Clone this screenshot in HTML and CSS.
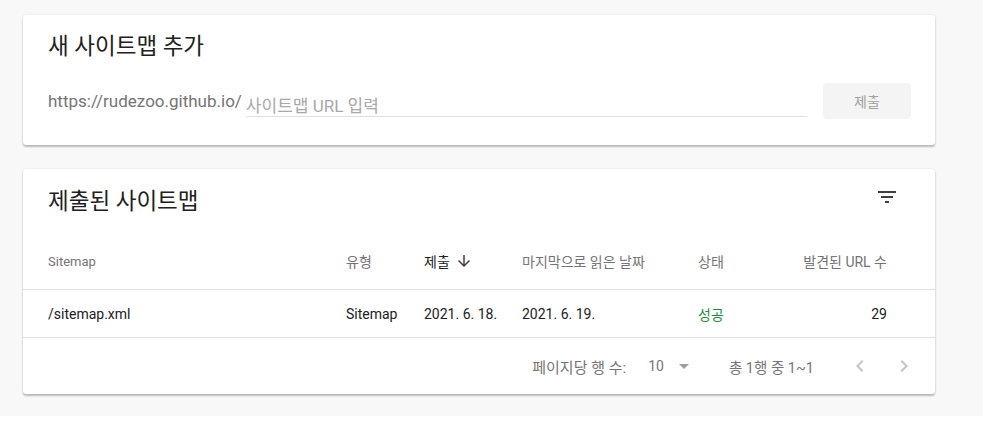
FILE: index.html
```html
<!DOCTYPE html>
<html lang="ko">
<head>
<meta charset="utf-8">
<title>Sitemaps</title>
<link rel="stylesheet" href="styles.css">
</head>
<body>
<div class="page">
  <section class="card add-card">
    <h2 class="card-title">새 사이트맵 추가</h2>
    <div class="form-row">
      <span class="prefix">https://rudezoo.github.io/</span>
      <div class="url-field"><input class="url-input" type="text" placeholder="사이트맵 URL 입력"></div>
      <button class="submit-btn" type="button">제출</button>
    </div>
  </section>

  <section class="card list-card">
    <div class="list-head">
      <h2 class="card-title">제출된 사이트맵</h2>
      <svg class="filter-icon" width="24" height="24" viewBox="0 0 24 24"><path d="M10 18h4v-2h-4v2zM3 6v2h18V6H3zm3 7h12v-2H6v2z" fill="#3c4043"/></svg>
    </div>
    <div class="trow thead">
      <div class="latin">Sitemap</div>
      <div>유형</div>
      <div class="sorted">제출<svg width="18" height="18" viewBox="0 0 24 24"><path d="M20 12l-1.41-1.41L13 16.17V4h-2v12.17l-5.58-5.59L4 12l8 8 8-8z" fill="#3c4043"/></svg></div>
      <div>마지막으로 읽은 날짜</div>
      <div>상태</div>
      <div class="num">발견된 URL 수</div>
    </div>
    <div class="trow tbody">
      <div>/sitemap.xml</div>
      <div>Sitemap</div>
      <div>2021. 6. 18.</div>
      <div>2021. 6. 19.</div>
      <div class="ok">성공</div>
      <div class="num">29</div>
    </div>
    <div class="pager">
      <span class="rows-label">페이지당 행 수:</span>
      <span class="rows-value">10</span>
      <svg class="drop" width="24" height="24" viewBox="0 0 24 24"><path d="M7 10l5 5 5-5z" fill="#9e9e9e"/></svg>
      <span class="range">총 1행 중 1~1</span>
      <svg class="chev" width="24" height="24" viewBox="0 0 24 24"><path d="M15.41 7.41L14 6l-6 6 6 6 1.41-1.41L10.83 12z" fill="#c4c4c4"/></svg>
      <svg class="chev next" width="24" height="24" viewBox="0 0 24 24"><path d="M10 6L8.59 7.41 13.17 12l-4.58 4.59L10 18l6-6z" fill="#c4c4c4"/></svg>
    </div>
  </section>
</div>
</body>
</html>
```

FILE: styles.css
```css
* { box-sizing: border-box; }
html, body { margin: 0; padding: 0; background: #fff; }
body {
  font-family: Roboto, "Noto Sans CJK KR", sans-serif;
  color: #212121;
}
.page {
  width: 983px;
  height: 416px;
  background: #f8f8f8;
  padding: 15px 0 0 23px;
  display: flex;
  flex-direction: column;
  gap: 24px;
}
.card {
  width: 912px;
  background: #fff;
  border-radius: 3px;
  box-shadow: 0 2px 2px rgba(0,0,0,0.24), 0 0 2px rgba(0,0,0,0.12);
}
.card-title {
  margin: 0;
  font-size: 22.5px;
  font-weight: 400;
  line-height: 32px;
  color: #212121;
}
.add-card {
  padding: 15px 24px 26px 25px;
}
.form-row {
  margin-top: 21px;
  display: flex;
  align-items: center;
  height: 36px;
}
.prefix {
  font-size: 17px;
  line-height: 20px;
  color: #757575;
}
.url-field {
  flex: 1;
  align-self: flex-start;
  height: 34px;
  margin: 0 16px 0 4px;
  border-bottom: 1px solid #e0e0e0;
  display: flex;
  align-items: flex-end;
}
.url-input {
  width: 100%;
  border: none;
  outline: none;
  background: transparent;
  font-family: Roboto, "Noto Sans CJK KR", sans-serif;
  font-size: 17px;
  line-height: 20px;
  padding: 0;
  color: #212121;
}
.url-input::placeholder { color: #a8a8a8; }
.submit-btn {
  width: 88px;
  height: 36px;
  border: none;
  border-radius: 4px;
  background: #f4f4f4;
  color: #9e9e9e;
  font-family: Roboto, "Noto Sans CJK KR", sans-serif;
  font-size: 14px;
  padding: 0;
}
.list-head {
  height: 64px;
  padding: 0 36px 0 25px;
  display: flex;
  align-items: center;
  justify-content: space-between;
}
.filter-icon { margin-top: -8px; display: block; }
.trow {
  display: grid;
  grid-template-columns: 298px 78px 98px 176px 1fr auto;
  align-items: center;
  padding: 0 48px 0 25px;
  border-bottom: 1px solid #e0e0e0;
}
.thead {
  height: 57px;
  font-size: 14px;
  color: #757575;
}
.thead .latin { font-size: 13px; }
.thead .sorted {
  color: #212121;
  display: flex;
  align-items: center;
  gap: 5px;
}
.thead .sorted svg { display: block; }
.tbody {
  height: 48px;
  font-size: 14px;
  color: #212121;
}
.num { text-align: right; }
.ok { color: #1e8e3e; }
.pager {
  height: 56px;
  display: flex;
  align-items: center;
  justify-content: flex-end;
  padding-right: 19px;
  font-size: 14px;
  color: #757575;
}
.rows-label { margin-right: 22px; font-size: 15px; }
.rows-value { margin-right: 8px; }
.drop { display: block; margin-right: 33px; }
.range { margin-right: 34px; font-size: 14.5px; }
.chev { display: block; }
.chev.next { margin-left: 20px; }
```
